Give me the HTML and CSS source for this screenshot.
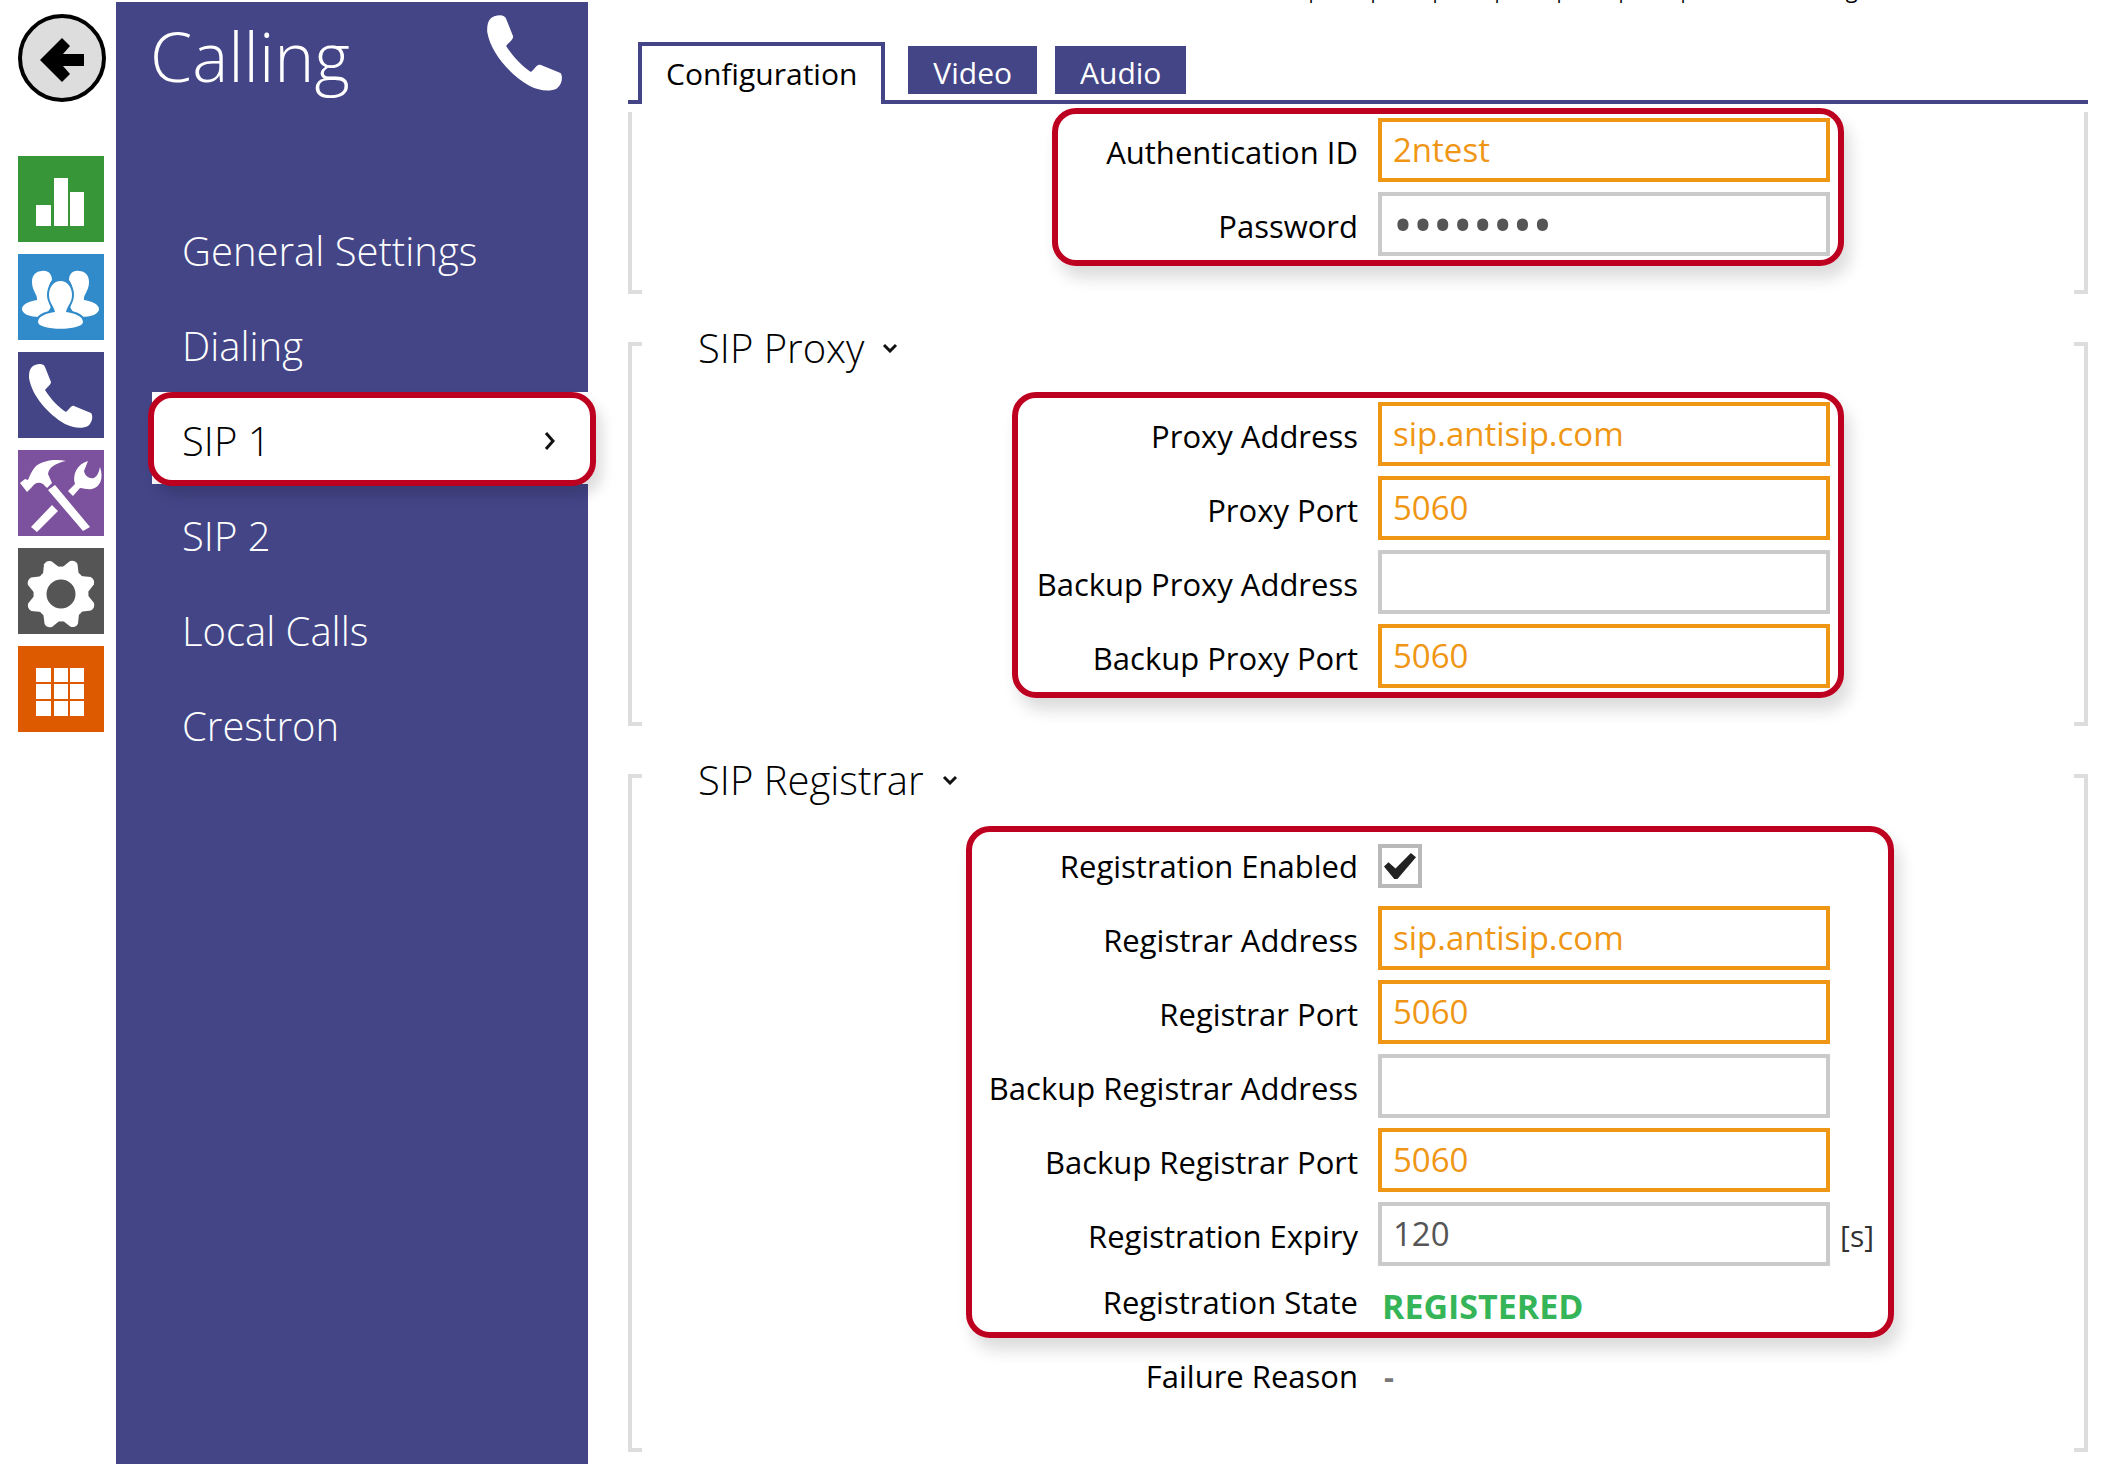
FILE: index.html
```
<!DOCTYPE html>
<html lang="en">

<head>
<meta charset="UTF-8">
<meta name="viewport" content="width=device-width, initial-scale=1.0">
<title>Calling - SIP 1</title>
<link rel="stylesheet" href="styles.css">
</head>

<body>
<!-- Icon rail -->
<nav class="rail" aria-label="Sections">
<a class="back" href="#" aria-label="Back">
<svg viewBox="0 0 88 88"><circle cx="44" cy="44" r="42" fill="#ddd" stroke="#000" stroke-width="4"/><path d="M22 46 L44 24 L52 32 L45 40 H66 V52 H45 L52 60 L44 68Z"/></svg>
</a>
<a class="tile status" href="#" aria-label="Status">
<svg viewBox="0 0 86 86"><path d="M18 49h15v21H18zM36 22h14v48H36zM52 36h14v34H52z"/></svg>
</a>
<a class="tile directory" href="#" aria-label="Directory">
<svg viewBox="0 0 86 86">
<path id="person" d="M24 17C30 16 34 20 34 26C29 32 29 42 33 49C34 55 28 61 22 63C12 63 4 60 4 55C4 50 12 47 19 46C20 41 14 37 14 28C14 21 18 17 24 17Z"/>
<use href="#person" transform="matrix(-1 0 0 1 85 0)"/>
<path class="front" d="M42.500 27C49 27 54 33 54 41C54 49 49 52 48 58C56 59 65 62 65 68C65 77 20 77 20 68C20 62 29 59 37 58C36 52 31 49 31 41C31 33 36 27 42.500 27Z"/>
</svg>
</a>
<a class="tile calling" href="#" aria-label="Calling">
<svg viewBox="0 0 86 86"><path id="phone" d="M17 13C22 11 26 12 27 15L33 30C33 33 29 35 27 38C32 46 40 55 48 60C51 58 53 53 56 54L73 61C75 63 75 70 70 74C64 77 55 76 47 72C30 62 14 44 11 26C11 19 12 15 17 13Z"/></svg>
</a>
<a class="tile services" href="#" aria-label="Services">
<svg viewBox="0 0 86 86"><path d="M2 33L7 29L10 30C12 25 14 20 18 16C26 10 38 9 48 11C38 13 31 17 30 24L34 33L29 38L25 34C20 31 16 34 14 37L9 42Z"/><path d="M30 40L37 35L72 77L65 81ZM13 77L34 55L40 61L19 82Z"/><path d="M50 41L57 34C54 25 59 14 70 11L66 21C67 26 71 29 76 28C80 26 81 21 82 17C86 29 82 37 74 39C69 40 66 38 62 38L55 46Z"/></svg>
</a>
<a class="tile system" href="#" aria-label="System">
<svg viewBox="0 0 86 86"><g transform="translate(43 46)"><circle r="21" fill="none" stroke="#fff" stroke-width="13"/><g id="teeth"><path id="tooth" d="M-9 -25L-4 -34Q0 -37 4 -34L9 -25Z" transform="rotate(22)"/><use href="#tooth" transform="rotate(45)"/><use href="#tooth" transform="rotate(90)"/><use href="#tooth" transform="rotate(135)"/></g><use href="#teeth" transform="rotate(180)"/></g></svg>
</a>
<a class="tile apps" href="#" aria-label="Applications">
<svg viewBox="0 0 86 86"><path d="M18 22h15v14H18zM36 22h14v14H36zM52 22h14v14H52zM18 38h15v15H18zM36 38h14v15H36zM52 38h14v15H52zM18 55h15v15H18zM36 55h14v15H36zM52 55h14v15H52z"/></svg>
</a>
</nav>

<!-- Side menu -->
<aside class="sidebar">
<header class="sidebar-head">
<h1>Calling</h1>
<svg viewBox="10 11 66 66"><use href="#phone"/></svg>
</header>
<ul class="menu">
<li><a href="#">General Settings</a></li>
<li><a href="#">Dialing</a></li>
<li class="active"><a href="#">SIP 1<svg class="arrow" viewBox="0 0 12 20"><path d="M2 2L9 10L2 18"/></svg></a></li>
<li><a href="#">SIP 2</a></li>
<li><a href="#">Local Calls</a></li>
<li><a href="#">Crestron</a></li>
</ul>
</aside>

<main class="content">
<div class="topbar">
<span>|</span><span>|</span><span>|</span><span>|</span><span>|</span><span>|</span><span>|</span>
<a href="#">Log out</a>
</div>

<div class="tabs">
<button type="button" class="tab current">Configuration</button>
<button type="button" class="tab">Video</button>
<button type="button" class="tab">Audio</button>
</div>

<section class="panel first">
<div class="callout auth">
<div class="row"><label for="authId">Authentication ID</label><input class="changed" type="text" id="authId" value="2ntest"></div>
<div class="row"><label for="password">Password</label><input type="password" id="password" value="12345678"></div>
</div>
</section>

<section class="panel">
<h2>SIP Proxy<svg class="toggle" viewBox="0 0 16 10"><path d="M2 2L8 8L14 2"/></svg></h2>
<div class="callout proxy">
<div class="row"><label for="proxyAddress">Proxy Address</label><input class="changed" type="text" id="proxyAddress" value="sip.antisip.com"></div>
<div class="row"><label for="proxyPort">Proxy Port</label><input class="changed" type="text" id="proxyPort" value="5060"></div>
<div class="row"><label for="backupProxyAddress">Backup Proxy Address</label><input type="text" id="backupProxyAddress"></div>
<div class="row"><label for="backupProxyPort">Backup Proxy Port</label><input class="changed" type="text" id="backupProxyPort" value="5060"></div>
</div>
</section>

<section class="panel last">
<h2>SIP Registrar<svg class="toggle" viewBox="0 0 16 10"><path d="M2 2L8 8L14 2"/></svg></h2>
<div class="callout registrar">
<div class="row check"><label for="regEnabled">Registration Enabled</label><input type="checkbox" id="regEnabled" checked></div>
<div class="row"><label for="regAddress">Registrar Address</label><input class="changed" type="text" id="regAddress" value="sip.antisip.com"></div>
<div class="row"><label for="regPort">Registrar Port</label><input class="changed" type="text" id="regPort" value="5060"></div>
<div class="row"><label for="backupRegAddress">Backup Registrar Address</label><input type="text" id="backupRegAddress"></div>
<div class="row"><label for="backupRegPort">Backup Registrar Port</label><input class="changed" type="text" id="backupRegPort" value="5060"></div>
<div class="row"><label for="regExpiry">Registration Expiry</label><input type="text" id="regExpiry" value="120"><span class="unit">[s]</span></div>
<div class="row info"><span class="label">Registration State</span><strong class="registered">REGISTERED</strong></div>
</div>
<div class="row info failure"><span class="label">Failure Reason</span><span class="reason">-</span></div>
</section>
</main>
</body>

</html>
```
FILE: styles.css
```
*,
*::before,
*::after {
box-sizing: border-box;
}

body {
margin: 0;
min-height: 100vh;
display: flex;
background-color: white;
color: black;
font-family: "Open Sans", "Noto Sans", sans-serif;
font-size: 31px;
line-height: 40px;
}

a {
color: inherit;
text-decoration: none;
}

svg {
display: block;
}

/* icon rail */
.rail {
width: 116px;
flex: none;
padding: 14px 0 0 18px;
display: flex;
flex-direction: column;
gap: 12px;
}

.back {
width: 88px;
height: 88px;
margin-bottom: 42px;
}

.tile {
width: 86px;
height: 86px;
fill: white;
}

.status {
background-color: #379637;
}

.directory {
background-color: #318bcb;
}

.directory .front {
stroke: #318bcb;
stroke-width: 4;
paint-order: stroke;
}

.calling {
background-color: #434587;
}

.services {
background-color: #7c519d;
}

.system {
background-color: #555;
}

.apps {
background-color: #de5a00;
}

/* side menu */
.sidebar {
width: 472px;
flex: none;
margin-top: 2px;
background-color: #434587;
color: white;
font-weight: 300;
}

.sidebar-head {
display: flex;
justify-content: space-between;
align-items: flex-start;
height: 200px;
padding: 12px 24px 0 34px;
}

.sidebar-head h1 {
margin: 0;
font-size: 68px;
font-weight: 300;
line-height: 84px;
}

.sidebar-head svg {
width: 78px;
height: 78px;
fill: white;
}

.menu {
display: grid;
gap: 3px;
list-style: none;
margin: 0;
padding: 0 0 0 36px;
font-size: 40px;
}

.menu a {
display: flex;
justify-content: space-between;
align-items: center;
height: 92px;
padding: 6px 32px 0 30px;
}

.menu .active {
position: relative;
background-color: white;
color: black;
}

.menu .active::after {
content: "";
position: absolute;
inset: 0 -8px -2px -4px;
border: 6px solid #be0020;
border-radius: 24px;
box-shadow: 6px 10px 14px rgba(0, 0, 0, 0.14);
pointer-events: none;
}

.arrow {
width: 12px;
height: 20px;
}

.arrow path,
.toggle path {
fill: none;
stroke: #111;
stroke-width: 3;
}

/* content */
.content {
flex: 1;
min-width: 0;
padding: 0 16px 0 40px;
}

.topbar {
display: flex;
align-items: flex-end;
justify-content: flex-end;
height: 4px;
overflow: hidden;
padding-right: 190px;
font-size: 22px;
line-height: 30px;
}

.topbar span {
width: 62px;
flex: none;
}

.topbar a {
flex: none;
margin-left: 82px;
}

.tabs {
display: flex;
align-items: flex-end;
gap: 18px;
margin-top: 38px;
padding-left: 10px;
height: 62px;
border-bottom: 4px solid #434587;
font-size: 30px;
}

.tab {
height: 48px;
margin-bottom: 6px;
padding: 5px 25px 0;
border: 0;
background-color: #434587;
color: white;
font: inherit;
}

.tab.current {
height: 62px;
margin: 0 5px -4px 0;
padding: 0 24px 2px;
border: 4px solid #434587;
border-bottom: 0;
background-color: white;
color: black;
}

.panel {
display: flow-root;
position: relative;
margin-bottom: 48px;
padding-bottom: 28px;
}

/* square brackets round a panel */
.panel::before,
.panel::after {
content: "";
position: absolute;
top: 0;
bottom: 0;
width: 14px;
border: 4px solid #ddd;
}

.panel::before {
left: 0;
border-right: 0;
}

.panel::after {
right: 0;
border-left: 0;
}

.panel.first::before,
.panel.first::after {
top: 8px;
border-top: 0;
}

.panel.first {
padding-top: 4px;
}

.panel.last {
margin-bottom: 12px;
padding-bottom: 50px;
}

.panel h2 {
display: flex;
align-items: center;
gap: 18px;
margin: -14px 0 0;
padding: 0 0 24px 70px;
font-size: 40px;
font-weight: 300;
line-height: 40px;
}

.toggle {
width: 16px;
height: 10px;
}

.callout {
display: grid;
gap: 10px;
padding: 4px 8px;
border: 6px solid #be0020;
border-radius: 24px;
box-shadow: 6px 12px 16px rgba(0, 0, 0, 0.14);
}

.auth {
width: 792px;
margin-left: calc(50% - 306px);
}

.proxy {
width: 832px;
margin-left: calc(50% - 346px);
}

.registrar {
width: 928px;
margin-top: 2px;
margin-left: calc(50% - 392px);
padding-right: 58px;
}

.row {
position: relative;
display: grid;
grid-template-columns: 1fr 452px;
column-gap: 20px;
align-items: center;
height: 64px;
}

.row.check {
height: 60px;
}

.row.info {
height: 52px;
}

.row.failure {
grid-template-columns: 50% 452px;
margin-top: 12px;
}

.row label,
.row .label {
padding-top: 3px;
text-align: right;
white-space: nowrap;
}

.row.check label,
.row.info .label {
padding-top: 0;
}

.row input {
width: 100%;
height: 64px;
padding: 0 11px 2px;
border: 4px solid #cacaca;
border-radius: 0;
background-color: white;
color: #555;
font: inherit;
font-size: 33px;
}

.row input.changed {
border-color: #ef9614;
color: #ef9614;
}

.row input[type="password"] {
font-size: 53px;
}

.row input[type="checkbox"] {
appearance: none;
width: 44px;
height: 44px;
margin: 0;
padding: 0;
border-color: #b9b9b9;
display: grid;
place-items: center;
}

.row input[type="checkbox"]:checked::before {
content: "";
width: 32px;
height: 26px;
background-color: #222;
clip-path: polygon(0 52%, 14% 36%, 36% 60%, 84% 0, 100% 16%, 42% 100%, 32% 100%);
}

.unit {
position: absolute;
right: -44px;
top: 14px;
font-size: 30px;
color: #333;
}

.registered {
padding: 8px 0 0 4px;
color: #36b558;
font-size: 34px;
}

.reason {
padding-left: 6px;
color: #777;
font-weight: 700;
}
```
